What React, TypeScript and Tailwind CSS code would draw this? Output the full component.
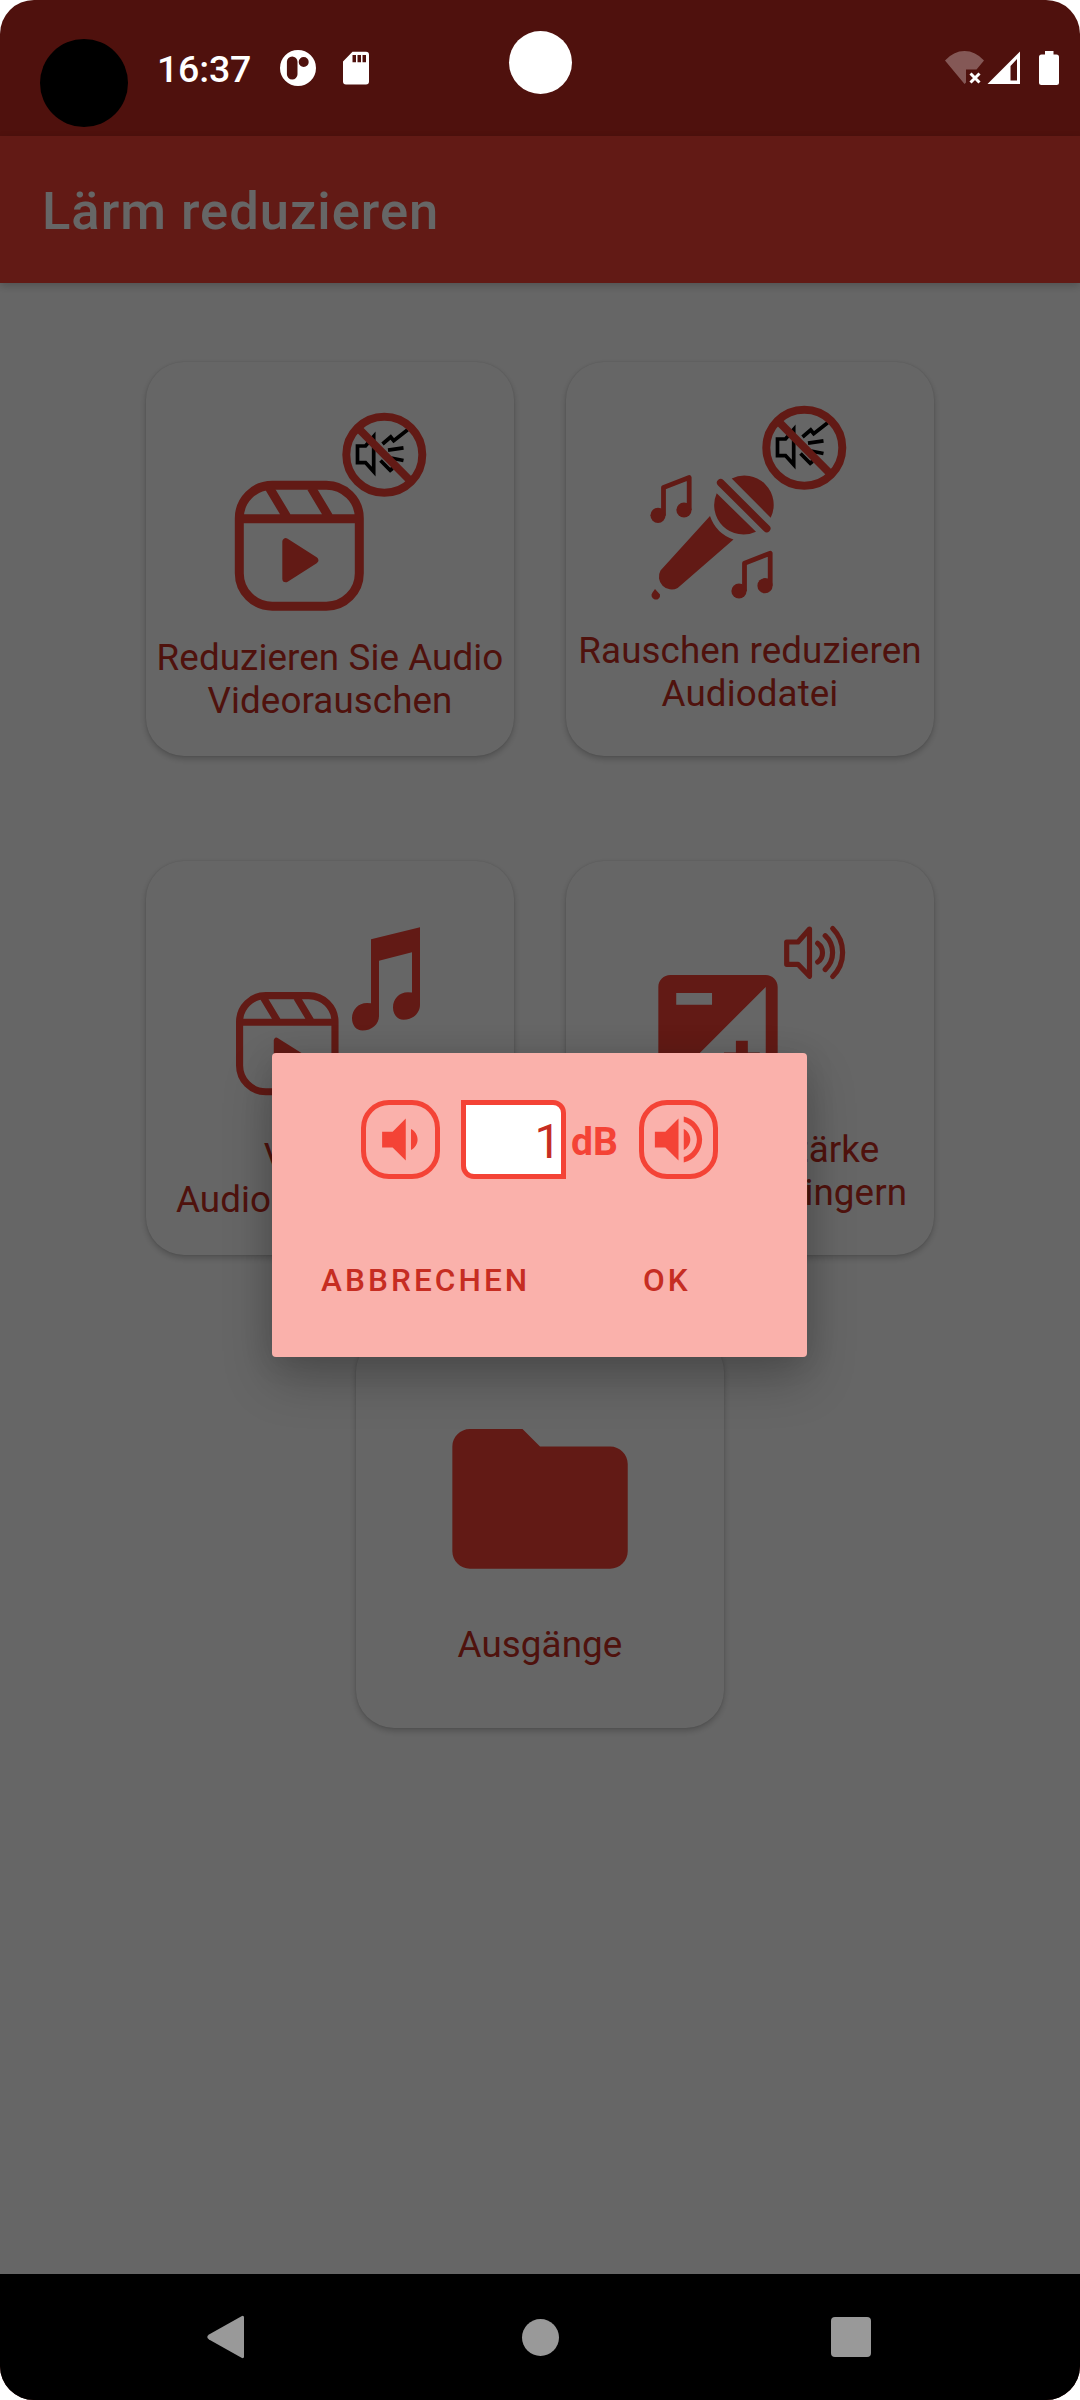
import type { ReactNode } from "react";

const RED = "#f44336";

function NoNoiseBadge({ y }: { y: number }) {
  return (
    <g transform={`translate(0 ${y})`} fill="none">
      <g stroke="#000" strokeWidth="3.7">
        <path d="M211.5 84v16.6h8l8.2 9V74.500l-8.200 9.500z" />
        <path d="M236.500 82l8.200-7 3 3.700 14-11M242 88.200l15.500-2.300M245 96l12.500 2.500M234.500 98.500l9.700 9.700 2.500-2" />
      </g>
      <g stroke={RED} strokeWidth="8">
        <circle cx="238.300" cy="92.700" r="38" />
        <path d="M212 66l52.500 53" />
      </g>
    </g>
  );
}

function Reel({ transform }: { transform: string }) {
  return (
    <g transform={transform} fill="none" stroke={RED} strokeWidth="9">
      <rect x="4.500" y="4.500" width="120" height="121" rx="33" />
      <path d="M4 38h121M34.500 7l18 30M76.500 7l18 30" />
      <path d="M51 61v37l29-18.500z" fill={RED} strokeWidth="7" strokeLinejoin="round" />
    </g>
  );
}

function NotePair({ transform }: { transform?: string }) {
  return (
    <g transform={transform} fill={RED}>
      <circle cx="92" cy="153.300" r="7.600" />
      <circle cx="118" cy="148" r="7.600" />
      <path d="M97.500 153.500v-28l25.700-10V148" fill="none" stroke={RED} strokeWidth="4.800" strokeLinejoin="round" />
    </g>
  );
}

function VideoNoiseIcon() {
  return (
    <svg width="368" height="274" viewBox="0 0 368 274" className="block shrink-0">
      <Reel transform="translate(88.800 118.700)" />
      <NoNoiseBadge y={0} />
    </svg>
  );
}

function AudioNoiseIcon() {
  return (
    <svg width="368" height="267" viewBox="0 0 368 267" className="block shrink-0">
      <NoNoiseBadge y={-7} />
      <NotePair />
      <NotePair transform="translate(81 75.700)" />
      <g fill={RED}>
        <path d="M150.700 131.300A29.300 29.300 0 0 0 190 169.700z" />
        <path d="M165.700 116.400A29.300 29.300 0 0 1 204.700 155.700z" />
        <path d="M144 154A38 38 0 0 0 167.500 177.500L111.700 226A12.800 12.800 0 0 1 94.500 208.500z" />
        <path d="M89 227l5 5.500a4.300 4.300 0 1 1-7.500-2z" />
      </g>
      <path d="M154.700 120.700l46 45.800" stroke={RED} strokeWidth="7.600" strokeLinecap="round" />
    </svg>
  );
}

function ConvertIcon() {
  return (
    <svg width="368" height="274" viewBox="0 0 368 274" className="block shrink-0">
      <Reel transform="translate(90 131) scale(.795)" />
      <path
        fill={RED}
        d="M225 78.300L274 66.300V144C274 152 267 158.800 257.500 158.800C251 158.800 247 153 247 146.500C247 138 253 131.300 262 131.300L266 131.500V91.300L233 99.700V155C233 163 226 169.600 216.500 169.600C210 169.600 206 164 206 157.300C206 149 212 142 221 142L225 142.300Z"
      />
    </svg>
  );
}

function VolumeChangeIcon() {
  return (
    <svg width="368" height="267" viewBox="0 0 368 267" className="block shrink-0">
      <path
        transform="translate(80.400 102.100) scale(5.967)"
        fill={RED}
        d="M15 17v2h2v-2h2v-2h-2v-2h-2v2h-2v2h2zm5-15H4c-1.100 0-2 .9-2 2v16c0 1.100.9 2 2 2h16c1.100 0 2-.9 2-2V4c0-1.100-.9-2-2-2zM5 5h6v2H5V5zm15 15H4L20 4v16z"
      />
      <g fill="none" stroke={RED} strokeWidth="5.200" strokeLinecap="round" strokeLinejoin="round">
        <path d="M220.700 81v22.300H232l11.500 12V68L232 81z" />
        <path d="M251.700 82.300a11.500 11.500 0 0 1 0 18.700M259.200 74.700a23 23 0 0 1 0 33.800M266.700 67.500a34 34 0 0 1 0 48" />
      </g>
    </svg>
  );
}

function FolderIcon() {
  return (
    <svg width="368" height="289" viewBox="0 0 368 289" className="block shrink-0">
      <path
        transform="translate(78.800 60) scale(8.770 8.740)"
        fill={RED}
        d="M10 4H4c-1.100 0-2 .9-2 2v12c0 1.100.9 2 2 2h16c1.100 0 2-.9 2-2V8c0-1.100-.9-2-2-2h-8l-2-2z"
      />
    </svg>
  );
}

function Card({ icon, lines }: { icon: ReactNode; lines: string[] }) {
  return (
    <div className="flex h-[394px] w-[368px] flex-col items-center rounded-[38px] bg-white shadow-[0_3px_6px_rgba(0,0,0,0.22),0_0_2px_rgba(0,0,0,0.12)]">
      {icon}
      <div className="text-center text-[36.750px] leading-[43px] tracking-[0.1px] whitespace-nowrap text-[#c62d22]">
        {lines.map((line) => (
          <div key={line}>{line}</div>
        ))}
      </div>
    </div>
  );
}

function StatusBar() {
  return (
    <div className="relative flex h-[136px] shrink-0 text-white">
      <div className="mt-[39px] ml-[40px] h-[88px] w-[88px] rounded-full bg-black" />
      <div className="mt-[47px] ml-[29px] w-[94px] text-[37.500px] leading-[45px] font-medium tracking-[-0.2px]">16:37</div>
      <svg width="38" height="38" viewBox="0 0 38 38" className="mt-[49px] ml-[28px]" fill="#fff">
        <path
          fillRule="evenodd"
          d="M19 1a18 18 0 1 1 0 36a18 18 0 0 1 0-36zM13.200 7.500a5.300 5.300 0 0 0-5.300 5.300v12.500a5.300 5.300 0 0 0 10.600 0V12.800a5.300 5.300 0 0 0-5.300-5.300zM24.700 8a5 5 0 1 0 0 10a5 5 0 0 0 0-10z"
        />
      </svg>
      <svg width="28" height="36" viewBox="0 0 28 36" className="mt-[51px] ml-[25px]" fill="#fff">
        <path fillRule="evenodd" d="M10.500.8H24a3 3 0 0 1 3 3V30.500a3 3 0 0 1-3 3H4a3 3 0 0 1-3-3V10.500zM10.500 4v7.300h3.500V4zm5 0v7.300h3.500V4zm5 0v7.300H24V4z" />
      </svg>
      <div className="absolute top-[31px] left-[509px] h-[63px] w-[63px] rounded-full bg-white" />
      <svg width="116" height="36" viewBox="944 50 116 36" className="mt-[50px] mr-[20px] ml-auto" fill="#fff">
        <path opacity=".3" d="M945 60.500Q953.500 51 964.500 51T984 60.500L976.500 69.500H966V82.500L964.500 84z" />
        <path d="M970.500 73.500l9 9m0-9l-9 9" stroke="#fff" strokeWidth="3" />
        <path fillRule="evenodd" d="M1020 51.500V84H987.500zM1017 59L1010.500 66V80.500H1017z" />
        <path d="M1045 51h8.500v3.500h3a2.500 2.500 0 0 1 2.500 2.500V82.500a2.500 2.500 0 0 1-2.500 2.500h-15a2.500 2.500 0 0 1-2.500-2.500V57a2.500 2.500 0 0 1 2.500-2.500h3.500z" />
      </svg>
    </div>
  );
}

function VolumeButton({ d }: { d: string }) {
  return (
    <button className="flex h-[79px] w-[79px] items-center justify-center rounded-[28px] border-[5px] border-[#f44336]">
      <svg width="63" height="63" viewBox="0 0 24 24" fill={RED} className="shrink-0">
        <path d={d} />
      </svg>
    </button>
  );
}

function VolumeDialog() {
  return (
    <div className="absolute top-[1053px] left-[272px] h-[304px] w-[535px] rounded-[4px] bg-[#fab1ab] pt-[47px] shadow-[0_22px_50px_rgba(0,0,0,0.24),0_4px_30px_rgba(0,0,0,0.1)]">
      <div className="flex pl-[89px]">
        <VolumeButton d="M18.500 12c0-1.770-1.020-3.290-2.500-4.030v8.050c1.480-.73 2.500-2.250 2.500-4.020zM5 9v6h4l5 5V4L9 9H5z" />
        <div className="ml-[21px] flex h-[79px] w-[105px] items-center justify-end rounded-tr-[13px] rounded-bl-[13px] border-[5px] border-[#f44336] bg-white pt-[4px] text-[47.250px] leading-[56px] text-[#c62d22]">
          1
        </div>
        <div className="w-[73px] pt-[19px] pl-[5px] text-[39px] leading-[46px] font-bold text-[#f44336]">dB</div>
        <VolumeButton d="M3 9v6h4l5 5V4L7 9H3zm13.500 3c0-1.770-1.020-3.290-2.500-4.030v8.050c1.480-.73 2.500-2.250 2.500-4.020zM14 3.230v2.060c2.890.86 5 3.540 5 6.710s-2.110 5.850-5 6.710v2.060c4.010-.91 7-4.490 7-8.770s-2.990-7.860-7-8.770z" />
      </div>
      <div className="flex pt-[83px] pl-[49px] text-[31.500px] leading-[37px] font-medium tracking-[3.100px] text-[#c62d22]">
        <button className="w-[322px] text-left">ABBRECHEN</button>
        <button>OK</button>
      </div>
    </div>
  );
}

function NavBar() {
  return (
    <div className="flex h-[126px] items-center justify-between bg-black pr-[209px] pl-[206px]">
      <svg width="39" height="44" viewBox="0 0 39 44" fill="#999">
        <path d="M35.500 1.200Q38 0 38 2.500V41.500Q38 44 35.500 42.800L3 24.500Q-.5 22 3 19.500z" />
      </svg>
      <div className="ml-[4px] h-[37px] w-[37px] rounded-full bg-[#999]" />
      <div className="h-[40px] w-[40px] rounded-[4px] bg-[#999]" />
    </div>
  );
}

export default function App() {
  return (
    <div className="h-[2400px] w-[1080px] bg-white font-[Roboto,sans-serif]">
      <div className="relative flex h-full flex-col overflow-hidden rounded-[34px] bg-[#4f110d]">
        <StatusBar />
        <div className="relative flex h-[2138px] flex-col bg-white">
          <header className="z-10 flex h-[147px] shrink-0 items-center bg-[#f44336] pl-[42px] text-[52.500px] leading-[62px] font-medium tracking-[1px] text-white shadow-[0_3px_8px_rgba(0,0,0,0.2)]">
            <h1 className="pt-[3px]">Lärm reduzieren</h1>
          </header>
          <main className="flex flex-col items-center pt-[79px]">
            <div className="flex gap-[52px]">
              <Card icon={<VideoNoiseIcon />} lines={["Reduzieren Sie Audio", "Videorauschen"]} />
              <Card icon={<AudioNoiseIcon />} lines={["Rauschen reduzieren", "Audiodatei"]} />
            </div>
            <div className="mt-[105px] flex gap-[52px]">
              <Card icon={<ConvertIcon />} lines={["Video in", "Audio konvertieren"]} />
              <Card icon={<VolumeChangeIcon />} lines={["Audiolautstärke", "erhöhen/verringern"]} />
            </div>
            <div className="mt-[79px]">
              <Card icon={<FolderIcon />} lines={["Ausgänge"]} />
            </div>
          </main>
          <div className="absolute inset-0 z-20 bg-black/60" />
        </div>
        <NavBar />
        <div className="absolute inset-0 z-30">
          <VolumeDialog />
        </div>
      </div>
    </div>
  );
}
